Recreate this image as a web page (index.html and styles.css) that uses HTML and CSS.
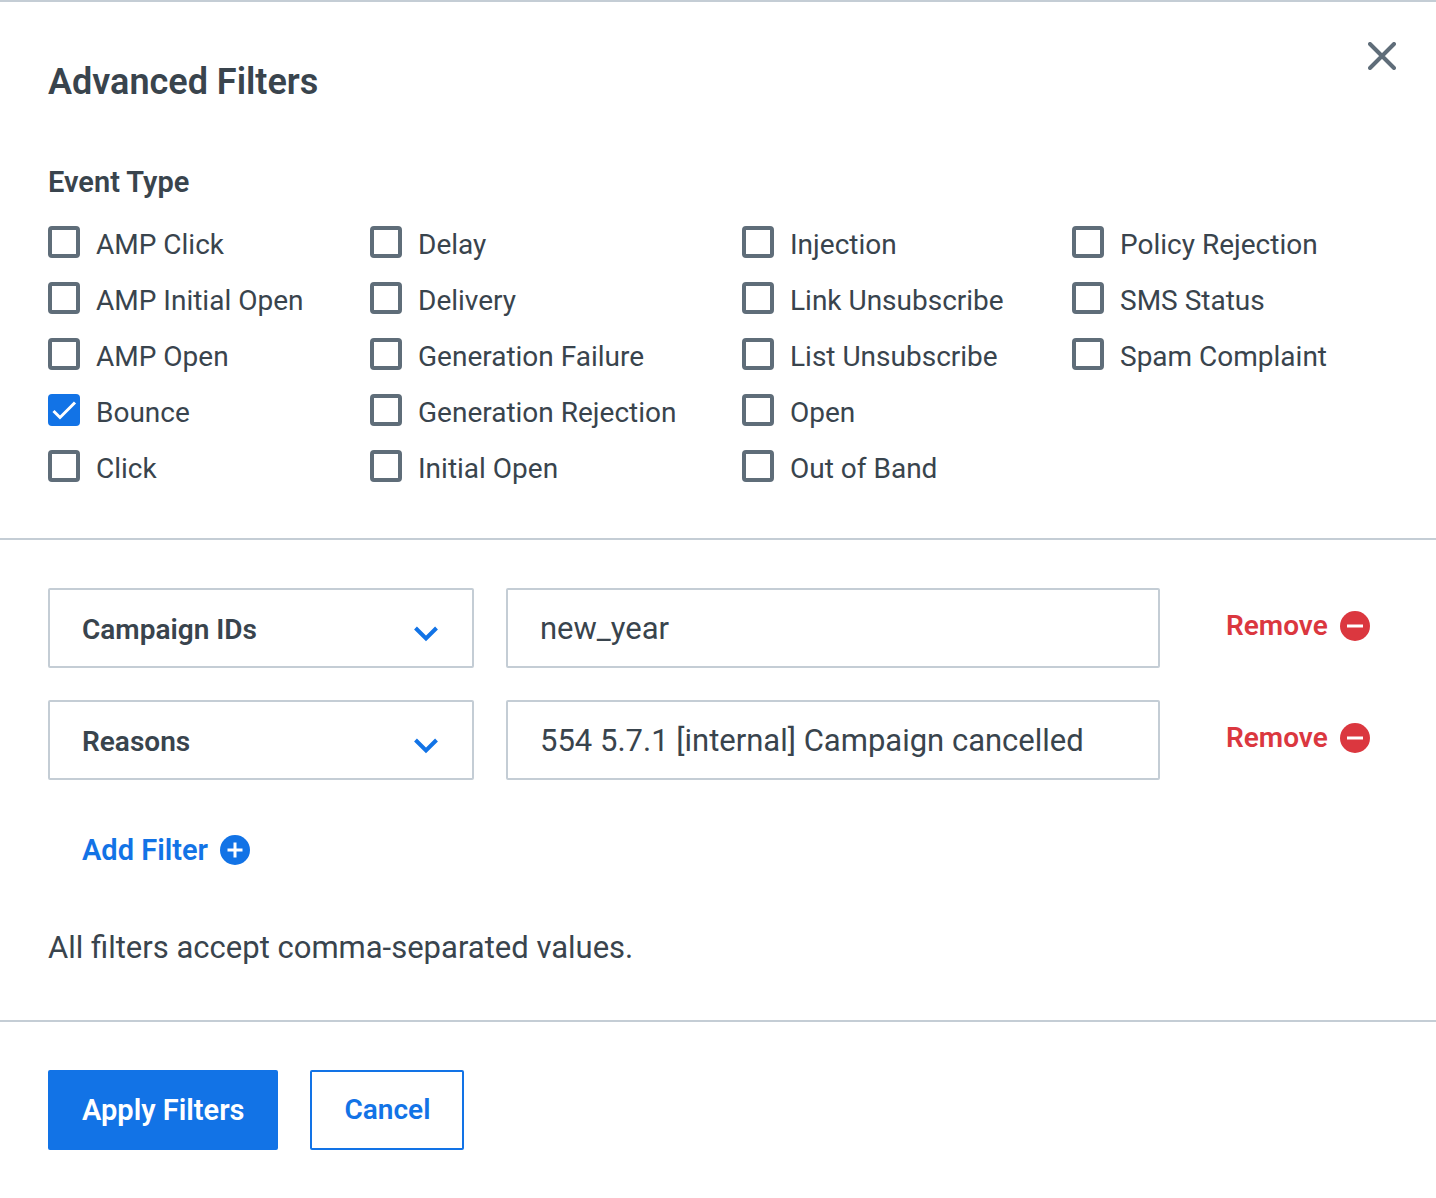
FILE: index.html
```html
<!DOCTYPE html>
<html lang="en">
<head>
<meta charset="utf-8">
<meta name="viewport" content="width=device-width, initial-scale=1">
<title>Advanced Filters</title>
<link rel="stylesheet" href="styles.css">
</head>
<body>
<form class="panel">
  <section class="section">
    <header class="header">
      <h1 class="title">Advanced Filters</h1>
      <button class="close" type="button" aria-label="Close">
        <svg width="28" height="28" viewBox="0 0 28 28" fill="none" stroke="currentColor" stroke-width="4" stroke-linecap="round"><path d="M2 2l24 24M26 2L2 26"/></svg>
      </button>
    </header>
    <fieldset class="events">
      <legend class="legend">Event Type</legend>
      <div class="columns">
        <div class="column">
          <label class="option"><input class="box" type="checkbox">AMP Click</label>
          <label class="option"><input class="box" type="checkbox">AMP Initial Open</label>
          <label class="option"><input class="box" type="checkbox">AMP Open</label>
          <label class="option"><input class="box" type="checkbox" checked>Bounce</label>
          <label class="option"><input class="box" type="checkbox">Click</label>
        </div>
        <div class="column">
          <label class="option"><input class="box" type="checkbox">Delay</label>
          <label class="option"><input class="box" type="checkbox">Delivery</label>
          <label class="option"><input class="box" type="checkbox">Generation Failure</label>
          <label class="option"><input class="box" type="checkbox">Generation Rejection</label>
          <label class="option"><input class="box" type="checkbox">Initial Open</label>
        </div>
        <div class="column">
          <label class="option"><input class="box" type="checkbox">Injection</label>
          <label class="option"><input class="box" type="checkbox">Link Unsubscribe</label>
          <label class="option"><input class="box" type="checkbox">List Unsubscribe</label>
          <label class="option"><input class="box" type="checkbox">Open</label>
          <label class="option"><input class="box" type="checkbox">Out of Band</label>
        </div>
        <div class="column">
          <label class="option"><input class="box" type="checkbox">Policy Rejection</label>
          <label class="option"><input class="box" type="checkbox">SMS Status</label>
          <label class="option"><input class="box" type="checkbox">Spam Complaint</label>
        </div>
      </div>
    </fieldset>
  </section>

  <section class="section filters">
    <div class="filter">
      <div class="picker">
        <select class="select" aria-label="Filter field 1"><option>Campaign IDs</option></select>
        <svg class="chevron" width="24" height="16" viewBox="0 0 24 16" fill="none" stroke="currentColor" stroke-width="4"><path d="M1.500 2l10.500 10.500L22.500 2"/></svg>
      </div>
      <input class="value" type="text" value="new_year" aria-label="Filter value 1">
      <button class="link remove" type="button">Remove
        <svg width="30" height="30" viewBox="0 0 30 30"><circle cx="15" cy="15" r="15" fill="currentColor"/><path d="M7 15h16" stroke="#fff" stroke-width="3"/></svg>
      </button>
    </div>
    <div class="filter">
      <div class="picker">
        <select class="select" aria-label="Filter field 2"><option>Reasons</option></select>
        <svg class="chevron" width="24" height="16" viewBox="0 0 24 16" fill="none" stroke="currentColor" stroke-width="4"><path d="M1.500 2l10.500 10.500L22.500 2"/></svg>
      </div>
      <input class="value" type="text" value="554 5.7.1 [internal] Campaign cancelled" aria-label="Filter value 2">
      <button class="link remove" type="button">Remove
        <svg width="30" height="30" viewBox="0 0 30 30"><circle cx="15" cy="15" r="15" fill="currentColor"/><path d="M7 15h16" stroke="#fff" stroke-width="3"/></svg>
      </button>
    </div>
    <button class="link add" type="button">Add Filter
      <svg width="30" height="30" viewBox="0 0 30 30"><circle cx="15" cy="15" r="15" fill="currentColor"/><path d="M7.500 15h15M15 7.500v15" stroke="#fff" stroke-width="3"/></svg>
    </button>
    <p class="hint">All filters accept comma-separated values.</p>
  </section>

  <footer class="section actions">
    <button class="button primary" type="submit">Apply Filters</button>
    <button class="button" type="button">Cancel</button>
  </footer>
</form>
</body>
</html>
```
FILE: styles.css
```css
* {
  box-sizing: border-box;
}

body {
  margin: 0;
  background: #fff;
  color: #39444d;
  font: 28px/32px Roboto, "Liberation Sans", sans-serif;
}

button,
input,
select {
  margin: 0;
  font: inherit;
  color: inherit;
}

button {
  cursor: pointer;
}

svg {
  flex: none;
}

.section {
  padding: 48px;
  border-top: 2px solid #c4cdd5;
}

.header {
  display: flex;
  justify-content: space-between;
  align-items: flex-start;
  margin-bottom: 60px;
}

.title {
  margin: 8px 0 0;
  font-size: 36px;
  line-height: 48px;
  font-weight: 600;
}

.close {
  display: flex;
  margin: -16px -16px 0 0;
  padding: 8px;
  border: 0;
  background: none;
  color: #5f6d79;
}

.events {
  margin: 0;
  padding: 0 0 4px;
  border: 0;
  min-width: 0;
}

.legend {
  margin-bottom: 28px;
  padding: 0;
  font-size: 29px;
  font-weight: 600;
}

.columns {
  display: grid;
  grid-template-columns: 322fr 372fr 330fr 316fr;
}

.column {
  display: flex;
  flex-direction: column;
  gap: 20px;
}

.option {
  display: flex;
  gap: 16px;
  height: 36px;
  line-height: 38px;
}

.box {
  appearance: none;
  flex: none;
  width: 32px;
  height: 32px;
  border: 4px solid #5f6d79;
  border-radius: 4px;
}

.box:checked {
  border: 0;
  background: #1273e6 url("data:image/svg+xml,%3Csvg xmlns='http://www.w3.org/2000/svg' viewBox='0 0 32 32' fill='none' stroke='white' stroke-width='3'%3E%3Cpath d='M5.500 17l6.500 6.500L27 8.500'/%3E%3C/svg%3E");
}

.filters {
  display: flex;
  flex-direction: column;
  gap: 32px;
}

.filter {
  display: grid;
  grid-template-columns: 426fr 654fr 196fr;
  gap: 32px;
}

.picker {
  display: grid;
  align-items: center;
}

.picker > * {
  grid-area: 1 / 1;
}

.select,
.value {
  width: 100%;
  min-width: 0;
  height: 80px;
  padding: 0 32px;
  border: 2px solid #c4cdd5;
  border-radius: 2px;
  background: #fff;
}

.select {
  appearance: none;
  padding-top: 4px;
  font-weight: 600;
}

.chevron {
  justify-self: end;
  margin: 12px 36px 0 0;
  color: #1273e6;
  pointer-events: none;
}

.value {
  font-size: 31px;
}

.link {
  display: flex;
  align-items: center;
  gap: 12px;
  height: 76px;
  padding: 0 0 0 34px;
  border: 0;
  background: none;
  font-weight: 600;
}

.remove {
  color: #db373f;
}

.add {
  align-self: flex-start;
  color: #1273e6;
  font-size: 29px;
}

.hint {
  margin: 8px 0 4px;
  font-size: 31px;
  line-height: 40px;
}

.actions {
  display: flex;
  gap: 32px;
}

.button {
  height: 80px;
  padding: 0 32px;
  border: 2px solid #1273e6;
  border-radius: 2px;
  background: #fff;
  color: #1273e6;
  font-weight: 600;
}

.primary {
  background: #1273e6;
  color: #fff;
  font-size: 29px;
}
```
